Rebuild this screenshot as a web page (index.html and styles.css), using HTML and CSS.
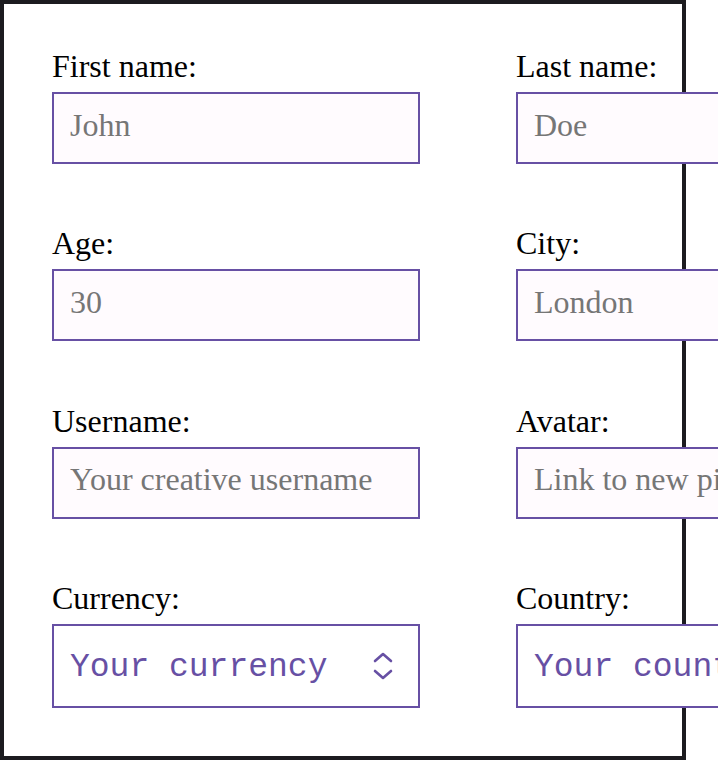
FILE: index.html
```html
<!DOCTYPE html>
<html lang="en">
<head>
<meta charset="utf-8">
<title>Form</title>
<link rel="stylesheet" href="styles.css">
</head>
<body>
<form class="form">
  <div class="field">
    <label for="first">First name:</label>
    <input id="first" class="text-input" type="text" placeholder="John">
  </div>
  <div class="field">
    <label for="last">Last name:</label>
    <input id="last" class="text-input" type="text" placeholder="Doe">
  </div>
  <div class="field">
    <label for="age">Age:</label>
    <input id="age" class="text-input" type="text" placeholder="30">
  </div>
  <div class="field">
    <label for="city">City:</label>
    <input id="city" class="text-input" type="text" placeholder="London">
  </div>
  <div class="field">
    <label for="username">Username:</label>
    <input id="username" class="text-input" type="text" placeholder="Your creative username">
  </div>
  <div class="field">
    <label for="avatar">Avatar:</label>
    <input id="avatar" class="text-input" type="text" placeholder="Link to new picture">
  </div>
  <div class="field">
    <label for="currency">Currency:</label>
    <div class="select-wrap">
      <select id="currency" class="select-input">
        <option>Your currency</option>
      </select>
      <svg class="chevrons" width="20" height="30" viewBox="0 0 20 30" aria-hidden="true">
        <path d="M2 10 L10 3 L18 10" />
        <path d="M2 20 L10 27 L18 20" />
      </svg>
    </div>
  </div>
  <div class="field">
    <label for="country">Country:</label>
    <div class="select-wrap">
      <select id="country" class="select-input">
        <option>Your country</option>
      </select>
      <svg class="chevrons" width="20" height="30" viewBox="0 0 20 30" aria-hidden="true">
        <path d="M2 10 L10 3 L18 10" />
        <path d="M2 20 L10 27 L18 20" />
      </svg>
    </div>
  </div>
</form>
</body>
</html>
```

FILE: styles.css
```css
html, body {
  margin: 0;
  padding: 0;
  background: #ffffff;
}

.form {
  box-sizing: border-box;
  width: 686px;
  margin: 0;
  border: 4px solid #1c1b1f;
  padding: 44px 48px 48px;
  display: grid;
  grid-template-columns: 368px 368px;
  column-gap: 96px;
  row-gap: 61.33px;
  font-family: "Liberation Serif", "Times New Roman", serif;
}

.field {
  display: flex;
  flex-direction: column;
  gap: 8px;
}

.field label {
  display: block;
  font-size: 32px;
  line-height: 36px;
  color: #000000;
}

.text-input {
  box-sizing: border-box;
  width: 368px;
  height: 72px;
  margin: 0;
  padding: 13px 16px 19px;
  line-height: 36px;
  border: 2px solid #6750a4;
  border-radius: 0;
  background: #fffbfe;
  font-family: "Liberation Serif", "Times New Roman", serif;
  font-size: 32px;
  color: #1c1b1f;
  outline: none;
}

.text-input::placeholder {
  color: #767676;
  opacity: 1;
}

.select-wrap {
  position: relative;
  width: 368px;
}

.select-input {
  box-sizing: border-box;
  width: 368px;
  height: 84px;
  margin: 0;
  padding: 4px 16px 0;
  border: 2px solid #6750a4;
  border-radius: 0;
  background: #ffffff;
  -webkit-appearance: none;
  appearance: none;
  font-family: "Liberation Mono", "DejaVu Sans Mono", monospace;
  font-size: 33px;
  color: #6750a4;
  outline: none;
}

.chevrons {
  position: absolute;
  right: 27px;
  top: 27px;
  fill: none;
  stroke: #6750a4;
  stroke-width: 2.6;
  stroke-linecap: round;
  stroke-linejoin: round;
  pointer-events: none;
}
```
